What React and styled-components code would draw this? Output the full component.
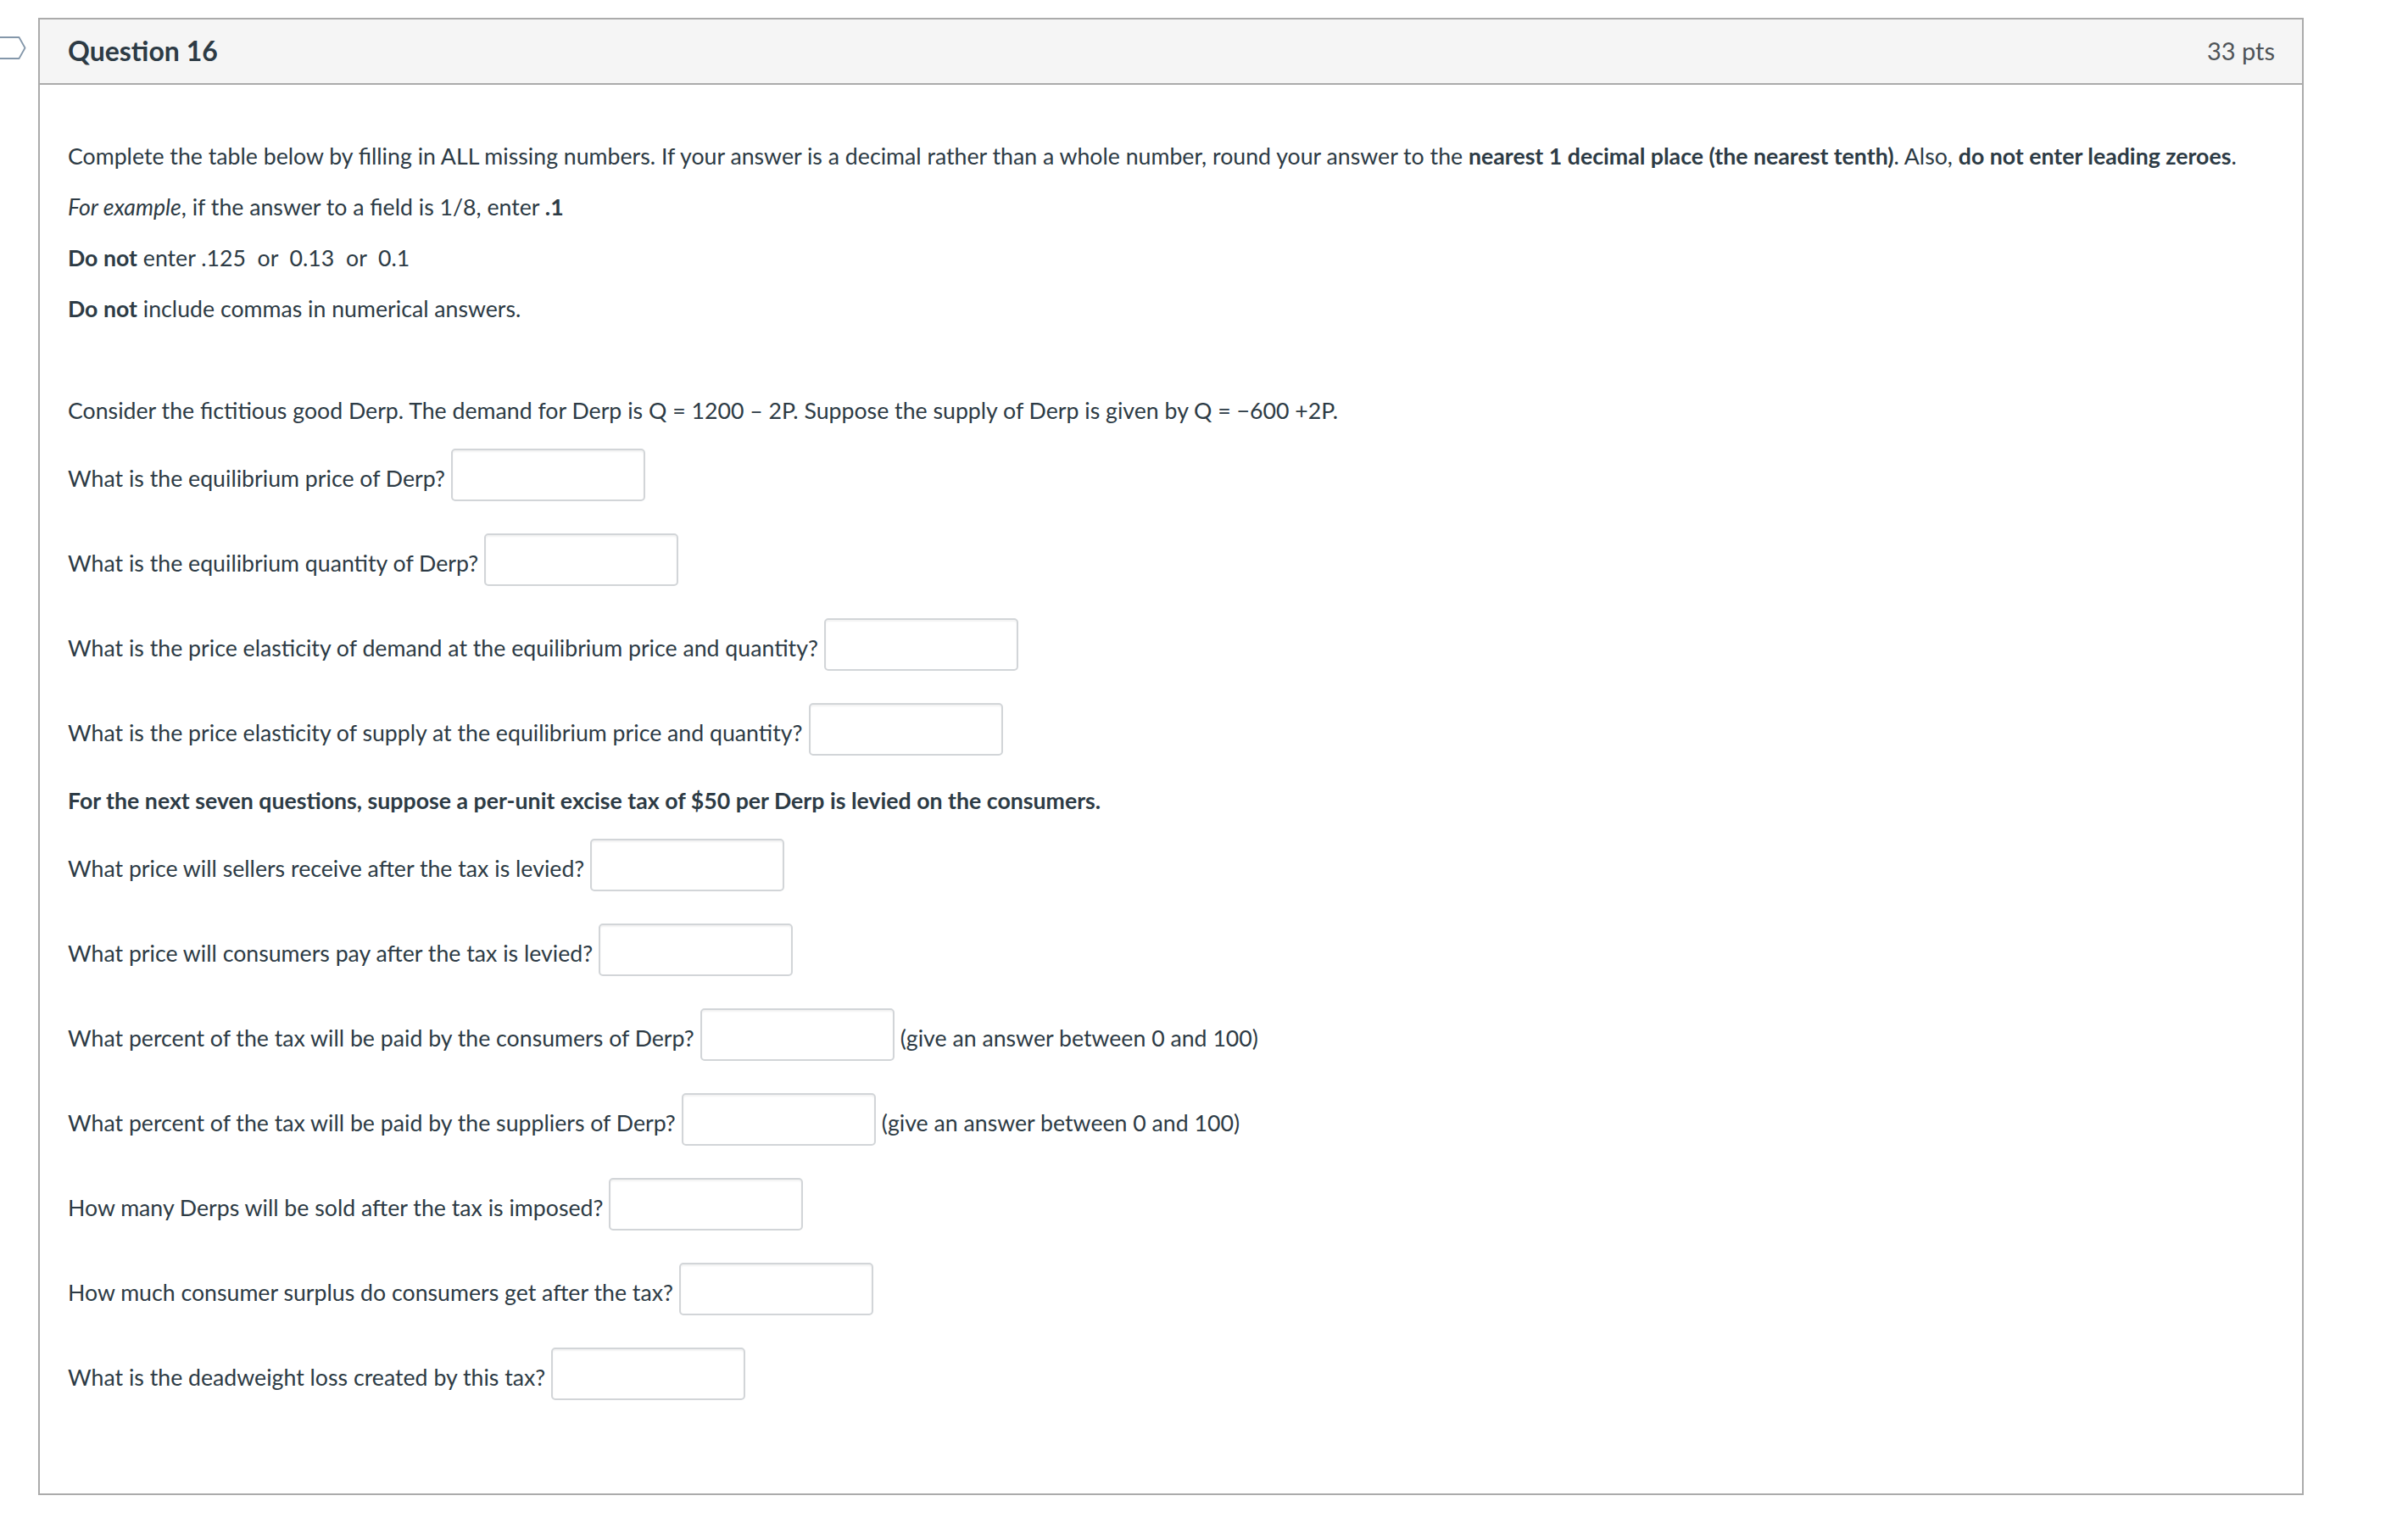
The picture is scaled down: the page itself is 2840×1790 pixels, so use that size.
import React from "react";
import styled, { createGlobalStyle } from "styled-components";

const Global = createGlobalStyle`
  html, body { margin: 0; padding: 0; background: #ffffff; }
  body { font-family: Lato, "Open Sans", "Liberation Sans", sans-serif; color: #2d3b45; }
`;

const Page = styled.div`
  display: flex;
  align-items: flex-start;
  padding-top: 21px;
  width: 2840px;
  min-height: 1790px;
  box-sizing: border-box;
`;

const Gutter = styled.div`
  width: 45px;
  flex: 0 0 45px;
  padding-top: 22px;
  display: flex;
`;

const QuestionBox = styled.section`
  width: 2672px;
  box-sizing: border-box;
  border: 2px solid #ababab;
  background: #ffffff;
`;

const Header = styled.header`
  display: flex;
  align-items: center;
  justify-content: space-between;
  height: 77px;
  box-sizing: border-box;
  padding: 0 32px 3px 33px;
  background: #f5f5f5;
  border-bottom: 2px solid #ababab;
`;

const Title = styled.h2`
  margin: 0;
  font-size: 32px;
  font-weight: 700;
  color: #2d3b45;
`;

const Points = styled.span`
  font-size: 29px;
  color: #4f5458;
`;

const Body = styled.div`
  padding: 64px 34px 77px 33px;
  font-size: 26.7px;
  line-height: 40px;
`;

const Para = styled.p`
  margin: 0 0 20px 0;
  font-weight: ${(p) => (p.$bold ? 700 : 400)};
  white-space: pre-wrap;
`;

const Row = styled.div`
  display: flex;
  align-items: flex-end;
  padding-top: 5px;
  margin-bottom: 33px;
`;

const Label = styled.span`
  padding-bottom: 7px;
  margin-right: 7px;
  white-space: nowrap;
`;

const Hint = styled.span`
  padding-bottom: 7px;
  margin-left: 7px;
  white-space: nowrap;
`;

const AnswerInput = styled.input`
  width: 229px;
  height: 62px;
  box-sizing: border-box;
  border: 2px solid #d2d5d8;
  border-radius: 5px;
  background: #ffffff;
  box-shadow: inset 0 2px 2px rgba(0, 0, 0, 0.05);
  font: inherit;
  padding: 0 12px;
  margin: 0;
  outline: none;
`;

const Flag = () => (
  <svg width="32" height="30" viewBox="0 0 32 30" aria-hidden="true">
    <path
      d="M -4 1 H 22.5 L 29.5 13.5 L 22.5 26 H -4"
      fill="none"
      stroke="#8497aa"
      strokeWidth="1.8"
      strokeLinejoin="round"
    />
  </svg>
);

const questions1 = [
  { label: "What is the equilibrium price of Derp?" },
  { label: "What is the equilibrium quantity of Derp?" },
  { label: "What is the price elasticity of demand at the equilibrium price and quantity?" },
  { label: "What is the price elasticity of supply at the equilibrium price and quantity?" },
];

const questions2 = [
  { label: "What price will sellers receive after the tax is levied?" },
  { label: "What price will consumers pay after the tax is levied?" },
  { label: "What percent of the tax will be paid by the consumers of Derp?", hint: "(give an answer between 0 and 100)" },
  { label: "What percent of the tax will be paid by the suppliers of Derp?", hint: "(give an answer between 0 and 100)" },
  { label: "How many Derps will be sold after the tax is imposed?" },
  { label: "How much consumer surplus do consumers get after the tax?" },
  { label: "What is the deadweight loss created by this tax?" },
];

const QuestionRow = ({ label, hint }) => (
  <Row>
    <Label>{label}</Label>
    <AnswerInput type="text" aria-label={label} />
    {hint && <Hint>{hint}</Hint>}
  </Row>
);

export default function App() {
  return (
    <>
      <Global />
      <Page>
        <Gutter>
          <Flag />
        </Gutter>
        <QuestionBox>
          <Header>
            <Title>Question 16</Title>
            <Points>33 pts</Points>
          </Header>
          <Body>
            <Para>
              Complete the table below by filling in ALL missing numbers. If your answer is a decimal rather than a whole number, round your answer to the <b>nearest 1 decimal place (the nearest tenth)</b>. Also, <b>do not enter leading zeroes</b>.
            </Para>
            <Para>
              <i>For example</i>, if the answer to a field is 1/8, enter <b>.1</b>
            </Para>
            <Para>
              <b>Do not</b> enter .125{"  "}or{"  "}0.13{"  "}or{"  "}0.1
            </Para>
            <Para>
              <b>Do not</b> include commas in numerical answers.
            </Para>
            <Para>{"\u00a0"}</Para>
            <Para>
              Consider the fictitious good Derp. The demand for Derp is Q = 1200 – 2P. Suppose the supply of Derp is given by Q = −600 +2P.
            </Para>
            {questions1.map((q) => (
              <QuestionRow key={q.label} {...q} />
            ))}
            <Para $bold>
              For the next seven questions, suppose a per-unit excise tax of $50 per Derp is levied on the consumers.
            </Para>
            {questions2.map((q) => (
              <QuestionRow key={q.label} {...q} />
            ))}
          </Body>
        </QuestionBox>
      </Page>
    </>
  );
}
